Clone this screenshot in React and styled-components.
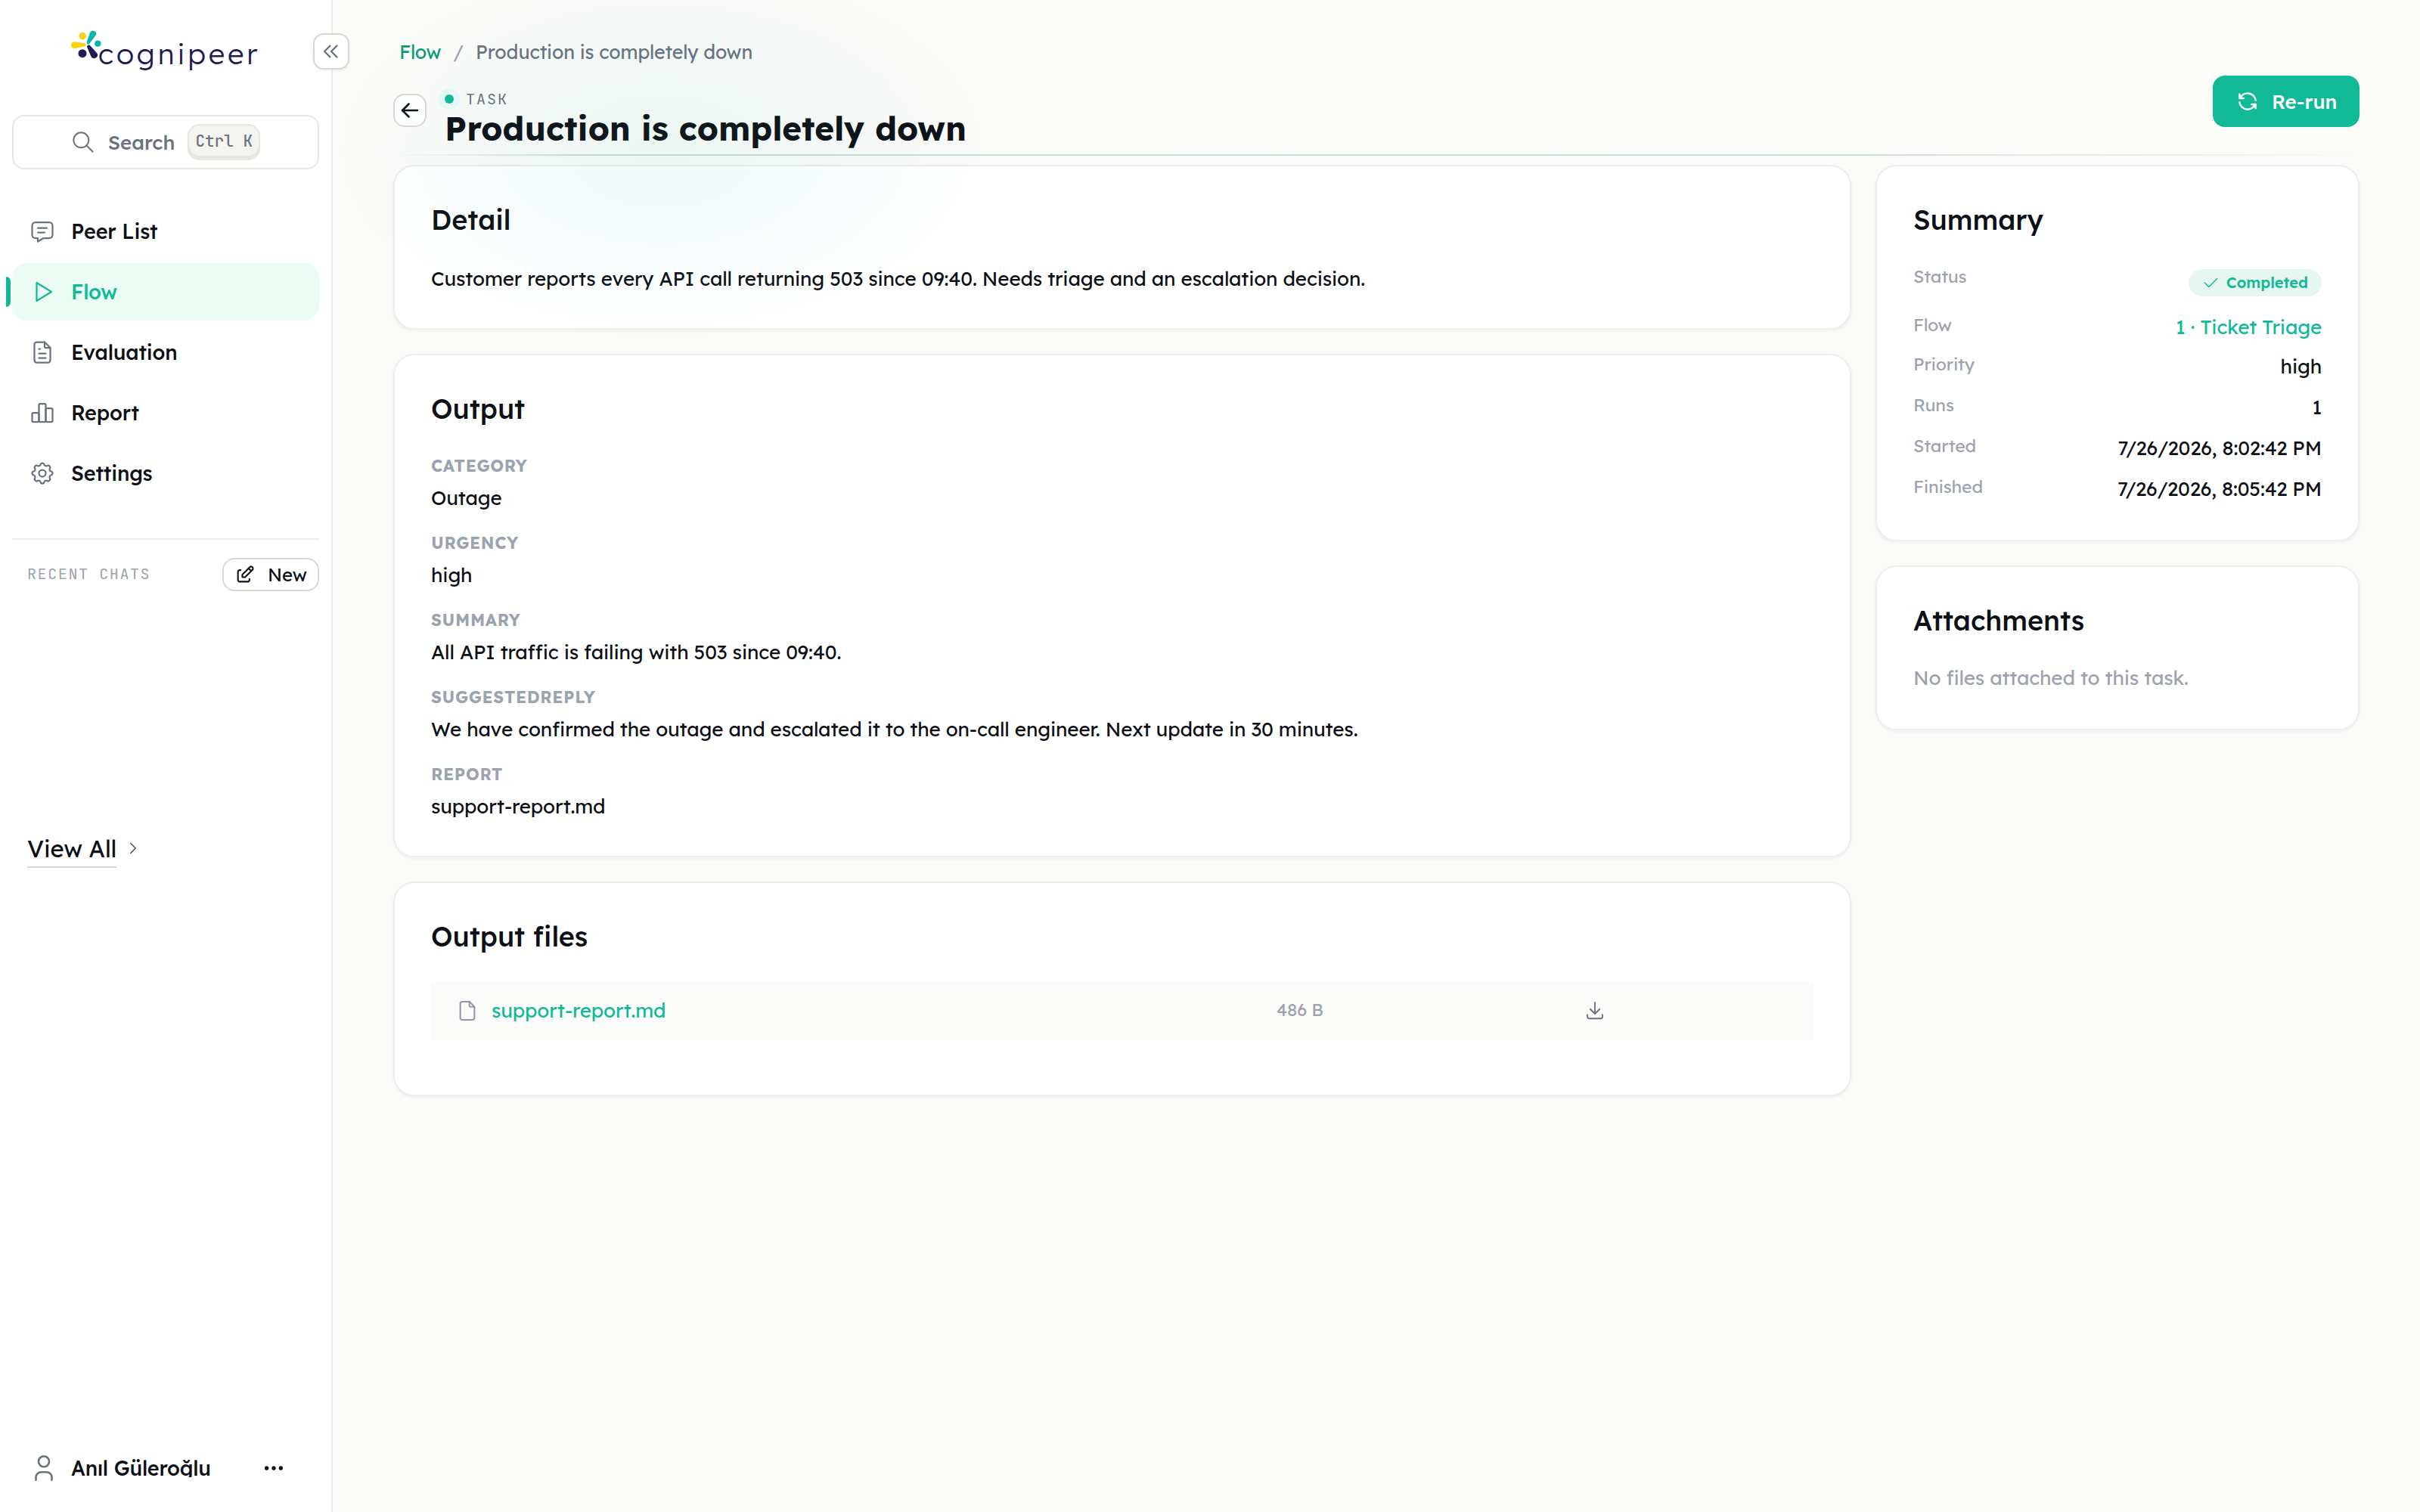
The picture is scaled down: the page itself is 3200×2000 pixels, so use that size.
import React from 'react';
import styled, { createGlobalStyle } from 'styled-components';
import {
  TbArrowLeft,
  TbCheck,
  TbChevronRight,
  TbChevronsLeft,
  TbDots,
  TbDownload,
  TbEdit,
  TbFile,
  TbFileText,
  TbMessage,
  TbPlayerPlay,
  TbRefresh,
  TbSettings,
  TbUser,
} from 'react-icons/tb';

const GlobalStyle = createGlobalStyle`
  * {
    box-sizing: border-box;
  }

  body {
    margin: 0;
    background: #fbfbf9;
    color: #0d1117;
    font-family: 'Lexend', 'Inter', sans-serif;
    font-size: 26px;
    letter-spacing: -0.006em;
  }

  h1, h2, p, dl, dt, dd {
    margin: 0;
  }

  svg {
    display: block;
    flex-shrink: 0;
  }
`;

const mono = "'JetBrains Mono', 'Liberation Mono', monospace";

const Page = styled.div`
  display: flex;
  height: 2000px;
  overflow: hidden;
`;

/* ---------- sidebar ---------- */

const Sidebar = styled.aside`
  position: relative;
  display: flex;
  flex-direction: column;
  width: 440px;
  flex-shrink: 0;
  padding: 0 16px;
  background: white;
  border-right: 2px solid #eeeeea;
  z-index: 2;
`;

const Logo = styled.div`
  display: flex;
  align-items: flex-start;
  height: 152px;
  padding: 38px 0 0 78px;
`;

const LogoText = styled.span`
  margin: 11px 0 0 -4px;
  font-size: 38px;
  font-weight: 350;
  line-height: 45px;
  letter-spacing: 3.9px;
  color: #221a52;
`;

const CollapseButton = styled.button`
  position: absolute;
  top: 44px;
  right: -24px;
  display: flex;
  align-items: center;
  justify-content: center;
  width: 48px;
  height: 48px;
  padding: 0;
  background: white;
  border: 2px solid #d9d9d2;
  border-radius: 14px;
  box-shadow: 0 2px 4px rgba(0, 0, 0, 0.06);
  color: #6b7280;

  svg {
    stroke-width: 1.6;
  }
`;

const SearchBox = styled.div`
  display: flex;
  align-items: center;
  justify-content: center;
  width: 406px;
  height: 72px;
  padding-left: 2px;
  border: 2px solid #e7e7e1;
  border-radius: 16px;
  color: #6b7280;
  font-weight: 500;
`;

const SearchLabel = styled.span`
  margin: 0 17px 0 19px;
  letter-spacing: 0;
`;

const Kbd = styled.kbd`
  width: 96px;
  height: 44px;
  margin-bottom: 4px;
  background: #f4f4f0;
  border: 2px solid #e7e7e1;
  border-radius: 16px;
  box-shadow: 0 4px 0 #e7e7e1;
  font-family: ${mono};
  font-size: 21px;
  font-weight: 500;
  line-height: 41px;
  letter-spacing: 0;
  text-align: center;
  white-space: pre;
`;

const Nav = styled.nav`
  display: flex;
  flex-direction: column;
  gap: 4px;
  width: 406px;
  margin-top: 44px;
`;

const NavItem = styled.a`
  position: relative;
  display: flex;
  align-items: center;
  gap: 20px;
  height: 76px;
  padding-left: 22px;
  border-radius: 20px;
  font-size: 27px;
  font-weight: 500;
  background: ${(p) => (p.$active ? '#ebfcf5' : 'transparent')};
  color: ${(p) => (p.$active ? '#12b996' : '#0d1117')};

  svg {
    color: ${(p) => (p.$active ? '#12b996' : '#6b7280')};
    stroke-width: 1.5;
  }

  &:before {
    content: '';
    display: ${(p) => (p.$active ? 'block' : 'none')};
    position: absolute;
    left: -8px;
    top: 18px;
    width: 6px;
    height: 40px;
    background: #12b996;
    border-radius: 0 6px 6px 0;
  }
`;

const ChatsHeader = styled.div`
  display: flex;
  align-items: center;
  justify-content: space-between;
  width: 406px;
  height: 72px;
  margin-top: 48px;
  padding: 24px 0 2px 20px;
  border-top: 2px solid #eeeeea;
`;

const ChatsLabel = styled.span`
  padding-bottom: 2px;
  font-family: ${mono};
  font-size: 20px;
  font-weight: 400;
  letter-spacing: 0.08em;
  color: #9ca3af;
`;

const NewButton = styled.button`
  display: flex;
  align-items: center;
  gap: 16px;
  width: 128px;
  height: 44px;
  padding: 0 0 0 14px;
  background: white;
  border: 2px solid #d9d9d2;
  border-radius: 16px;
  color: #0d1117;
  font: inherit;
  font-size: 24px;

  svg {
    stroke-width: 1.8;
  }
`;

const ViewAll = styled.a`
  display: flex;
  align-items: center;
  gap: 9px;
  margin: 312px 0 0 20px;

  svg {
    stroke-width: 1.5;
    color: #4b5563;
  }
`;

const ViewAllText = styled.span`
  height: 52px;
  border-bottom: 2px solid #d9d9d2;
  font-size: 31px;
  line-height: 53px;
`;

const UserRow = styled.div`
  display: flex;
  align-items: center;
  height: 64px;
  margin: auto 0 26px;
  padding-left: 21px;

  svg:first-child {
    color: #6b7280;
    stroke-width: 1.5;
  }
`;

const UserName = styled.span`
  width: 252px;
  margin-left: 15px;
  height: 24px;
  line-height: 24px;
  overflow: hidden;
  font-size: 27px;
  font-weight: 500;
`;

/* ---------- main column ---------- */

const Main = styled.main`
  position: relative;
  flex: 1;
  padding: 48px 80px 0;
`;

const Glow = styled.div`
  position: absolute;
  top: -50px;
  left: 0;
  width: 870px;
  height: 500px;
  pointer-events: none;
  background: radial-gradient(
    closest-side,
    rgba(16, 170, 140, 0.062),
    rgba(30, 170, 165, 0.04) 45%,
    rgba(60, 170, 190, 0.014) 78%,
    transparent
  );
  z-index: 1;
`;

const Breadcrumb = styled.div`
  display: flex;
  height: 40px;
  padding-left: 8px;
  font-size: 25px;
  line-height: 41px;
  color: #6b7280;
`;

const BreadcrumbLink = styled.a`
  color: #0d9b74;
`;

const Slash = styled.span`
  margin: 0 16px;
  color: #9ca3af;
`;

const Header = styled.header`
  display: flex;
  align-items: flex-start;
  height: 106px;
  margin-top: 12px;
  border-bottom: 2px solid;
  border-image: linear-gradient(to right, transparent, #c4ddd3 10%, #cfe0d9 75%, transparent) 1;
`;

const BackButton = styled.button`
  display: flex;
  align-items: center;
  justify-content: center;
  width: 44px;
  height: 44px;
  margin-top: 24px;
  padding: 0;
  background: white;
  border: 2px solid #d9d9d2;
  border-radius: 15px;
  color: #0d1117;

  svg {
    stroke-width: 1.8;
  }
`;

const Heading = styled.div`
  flex: 1;
  padding: 18px 0 0 24px;
`;

const Kicker = styled.div`
  display: flex;
  align-items: center;
  gap: 16px;
  height: 26px;
  font-family: ${mono};
  font-size: 20px;
  font-weight: 400;
  line-height: 26px;
  letter-spacing: 0.1em;
  color: #6b7280;
`;

const Dot = styled.i`
  width: 12px;
  height: 12px;
  background: #12b996;
  border-radius: 50%;
  box-shadow: 0 0 0 8px #e8fbf5;
`;

const Title = styled.h1`
  font-size: 44px;
  font-weight: 700;
  line-height: 51px;
  letter-spacing: 0;
`;

const PrimaryButton = styled.button`
  display: flex;
  align-items: center;
  gap: 16px;
  width: 194px;
  height: 68px;
  padding: 0 0 0 30px;
  background: #12b996;
  border: none;
  border-radius: 16px;
  color: white;
  font: inherit;
  font-weight: 500;
  letter-spacing: 0;

  svg {
    stroke-width: 1.8;
  }
`;

const Columns = styled.div`
  display: grid;
  grid-template-columns: 1fr 640px;
  gap: 32px;
  margin-top: 12px;
`;

const Stack = styled.div`
  display: flex;
  flex-direction: column;
  gap: 32px;
`;

const Card = styled.section`
  padding: 48px 48px ${(p) => p.$bottom || 47}px;
  background: white;
  border: 2px solid #eeeeea;
  border-radius: 28px;
  box-shadow: 0 2px 4px rgba(13, 17, 23, 0.06);
`;

const CardTitle = styled.h2`
  margin-bottom: 37px;
  font-size: 36px;
  font-weight: 500;
  line-height: 45px;
  letter-spacing: 0;
`;

const Text = styled.p`
  padding-top: 1px;
  line-height: 36px;
`;

const EmptyText = styled.p`
  line-height: 33px;
  color: #9ca3af;
`;

const Fields = styled.dl`
  display: grid;
  gap: 25px;
`;

const FieldLabel = styled.dt`
  margin-bottom: 9px;
  font-size: 22px;
  font-weight: 700;
  line-height: 32px;
  letter-spacing: 0.027em;
  text-transform: uppercase;
  color: #9ca3af;
`;

const FieldValue = styled.dd`
  line-height: 36px;
`;

const FileRow = styled.div`
  display: grid;
  grid-template-columns: 1118px 406px 1fr;
  align-items: center;
  height: 78px;
  padding-bottom: 2px;
  background: #fbfbf9;
  color: #6b7280;

  svg {
    stroke-width: 1.5;
  }
`;

const FileName = styled.a`
  display: flex;
  align-items: center;
  gap: 16px;
  padding-left: 32px;
  color: #12b996;

  svg {
    margin-top: 2px;
    color: #9197a5;
  }
`;

const FileSize = styled.span`
  padding-bottom: 1px;
  font-size: 23px;
  color: #9ca3af;
`;

const SummaryList = styled.div`
  padding-top: 1px;
`;

const SummaryRow = styled.div`
  display: flex;
  align-items: flex-start;
  justify-content: space-between;
  height: ${(p) => p.$height || 54}px;
`;

const SummaryLabel = styled.span`
  font-size: 23px;
  line-height: 30px;
  color: #9ca3af;
`;

const SummaryValue = styled.span`
  line-height: 36px;
  color: ${(p) => (p.$link ? '#12b996' : 'inherit')};
`;

const Badge = styled.span`
  display: flex;
  align-items: center;
  gap: 8px;
  height: 36px;
  margin-top: 5px;
  padding: 0 18px 0 16px;
  background: #e6f7f2;
  border-radius: 18px;
  font-size: 20px;
  font-weight: 600;
  line-height: 34px;
  letter-spacing: 0;
  color: #12b996;

  svg {
    stroke-width: 1.4;
  }
`;

const LogoMark = () => (
  <svg width="40" height="42" viewBox="0 0 40 42">
    <g fill="#f6d20f">
      <circle cx="15.3" cy="9.7" r="4.7" />
      <path d="M4.6 17.2 L18.2 19.2 A2.1 2.1 0 0 1 18.2 23.2 L5.4 26.1 A4.5 4.5 0 1 1 4.6 17.2Z" />
    </g>
    <g fill="#05b8a6">
      <circle cx="35.3" cy="19.7" r="4.1" />
      <path d="M25.2 4.6 A4.5 4.5 0 0 1 33.4 7.6 L24.7 19.2 A2.1 2.1 0 0 1 20.8 17.6Z" />
    </g>
    <g fill="#221a52">
      <circle cx="15" cy="32.7" r="5.5" />
      <path d="M21 24 A2.4 2.4 0 0 1 25.2 22.3 L34.8 33 A4.7 4.7 0 0 1 26.8 37.6Z" />
    </g>
  </svg>
);

const SearchIcon = () => (
  <svg width="28" height="28" viewBox="0 0 28 28" fill="none" stroke="currentColor" strokeWidth="2">
    <circle cx="11.3" cy="11.3" r="10" />
    <path d="M18.4 18.4 L27.2 27.2" />
  </svg>
);

const BarsIcon = () => (
  <svg width="36" height="36" viewBox="0 0 24 24" fill="none" stroke="currentColor" strokeLinejoin="round">
    <rect x="3" y="12" width="6" height="8" rx="1" />
    <rect x="9" y="4" width="6" height="16" rx="1" />
    <rect x="15" y="8" width="6" height="12" rx="1" />
  </svg>
);

const navItems = [
  { label: 'Peer List', icon: <TbMessage size={36} /> },
  { label: 'Flow', icon: <TbPlayerPlay size={36} />, active: true },
  { label: 'Evaluation', icon: <TbFileText size={36} /> },
  { label: 'Report', icon: <BarsIcon /> },
  { label: 'Settings', icon: <TbSettings size={36} /> },
];

const output = [
  ['category', 'Outage'],
  ['urgency', 'high'],
  ['summary', 'All API traffic is failing with 503 since 09:40.'],
  ['suggestedReply', 'We have confirmed the outage and escalated it to the on-call engineer. Next update in 30 minutes.'],
  ['report', 'support-report.md'],
];

const App = () => {
  return (
    <Page>
      <GlobalStyle />
      <Sidebar>
        <Logo>
          <LogoMark />
          <LogoText>cognipeer</LogoText>
        </Logo>
        <CollapseButton>
          <TbChevronsLeft size={36} />
        </CollapseButton>
        <SearchBox>
          <SearchIcon />
          <SearchLabel>Search</SearchLabel>
          <Kbd>Ctrl K</Kbd>
        </SearchBox>
        <Nav>
          {navItems.map((item) => (
            <NavItem key={item.label} $active={item.active}>
              {item.icon}
              {item.label}
            </NavItem>
          ))}
        </Nav>
        <ChatsHeader>
          <ChatsLabel>RECENT CHATS</ChatsLabel>
          <NewButton>
            <TbEdit size={28} />
            New
          </NewButton>
        </ChatsHeader>
        <ViewAll>
          <ViewAllText>View All</ViewAllText>
          <TbChevronRight size={26} />
        </ViewAll>
        <UserRow>
          <TbUser size={42} />
          <UserName>Anıl Güleroğlu</UserName>
          <TbDots size={32} />
        </UserRow>
      </Sidebar>

      <Main>
        <Glow />
        <Breadcrumb>
          <BreadcrumbLink>Flow</BreadcrumbLink>
          <Slash>/</Slash>
          <span>Production is completely down</span>
        </Breadcrumb>
        <Header>
          <BackButton>
            <TbArrowLeft size={34} />
          </BackButton>
          <Heading>
            <Kicker>
              <Dot />
              TASK
            </Kicker>
            <Title>Production is completely down</Title>
          </Heading>
          <PrimaryButton>
            <TbRefresh size={32} />
            Re-run
          </PrimaryButton>
        </Header>

        <Columns>
          <Stack>
            <Card>
              <CardTitle>Detail</CardTitle>
              <Text>
                Customer reports every API call returning 503 since 09:40. Needs triage and an escalation decision.
              </Text>
            </Card>
            <Card>
              <CardTitle>Output</CardTitle>
              <Fields>
                {output.map(([name, value]) => (
                  <div key={name}>
                    <FieldLabel>{name}</FieldLabel>
                    <FieldValue>{value}</FieldValue>
                  </div>
                ))}
              </Fields>
            </Card>
            <Card $bottom={72}>
              <CardTitle>Output files</CardTitle>
              <FileRow>
                <FileName>
                  <TbFile size={32} />
                  support-report.md
                </FileName>
                <FileSize>486 B</FileSize>
                <TbDownload size={30} />
              </FileRow>
            </Card>
          </Stack>
          <Stack>
            <Card $bottom={31}>
              <CardTitle>Summary</CardTitle>
              <SummaryList>
                <SummaryRow $height={64}>
                  <SummaryLabel>Status</SummaryLabel>
                  <Badge>
                    <TbCheck size={26} />
                    Completed
                  </Badge>
                </SummaryRow>
                <SummaryRow $height={52}>
                  <SummaryLabel>Flow</SummaryLabel>
                  <SummaryValue $link>1 · Ticket Triage</SummaryValue>
                </SummaryRow>
                <SummaryRow>
                  <SummaryLabel>Priority</SummaryLabel>
                  <SummaryValue>high</SummaryValue>
                </SummaryRow>
                <SummaryRow>
                  <SummaryLabel>Runs</SummaryLabel>
                  <SummaryValue>1</SummaryValue>
                </SummaryRow>
                <SummaryRow>
                  <SummaryLabel>Started</SummaryLabel>
                  <SummaryValue>7/26/2026, 8:02:42 PM</SummaryValue>
                </SummaryRow>
                <SummaryRow>
                  <SummaryLabel>Finished</SummaryLabel>
                  <SummaryValue>7/26/2026, 8:05:42 PM</SummaryValue>
                </SummaryRow>
              </SummaryList>
            </Card>
            <Card $bottom={51}>
              <CardTitle>Attachments</CardTitle>
              <EmptyText>No files attached to this task.</EmptyText>
            </Card>
          </Stack>
        </Columns>
      </Main>
    </Page>
  );
};

export default App;
